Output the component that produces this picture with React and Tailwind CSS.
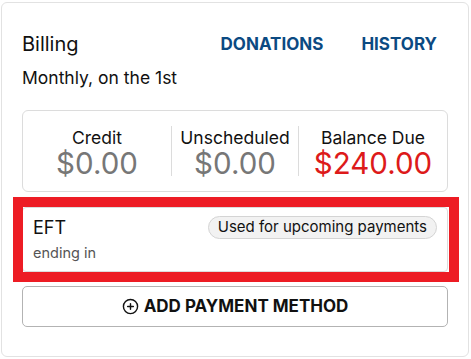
import React from "react";
import { CirclePlus } from "lucide-react";

export default function App() {
  return (
    <div className="w-[471px] h-[359px] bg-white pl-px pt-[2px] font-['Inter',sans-serif] text-[#111]">
      <div className="w-[468px] h-[355px] border border-[#e2e2e2] rounded-[6px] px-5 pt-[27px]">
        <div className="flex items-center justify-between h-[28px]">
          <div className="text-[20px] leading-[28px]">Billing</div>
          <div className="flex items-center gap-[38px] mr-[11px] text-[17px] leading-[24px] font-bold text-[#0b4a82]">
            <span>DONATIONS</span>
            <span>HISTORY</span>
          </div>
        </div>
        <div className="mt-2 text-[17.5px] leading-[24px]">Monthly, on the 1st</div>

        <div className="mt-5 border border-[#dcdcdc] rounded-[6px] py-[15px] grid grid-cols-[148px_127px_1fr]">
          <div className="flex flex-col items-center">
            <div className="text-[17.5px] leading-[24px]">Credit</div>
            <div className="text-[29.5px] leading-[26px] text-[#777777]">$0.00</div>
          </div>
          <div className="flex flex-col items-center border-l border-[#dcdcdc]">
            <div className="text-[17.5px] leading-[24px]">Unscheduled</div>
            <div className="text-[29.5px] leading-[26px] text-[#777777]">$0.00</div>
          </div>
          <div className="flex flex-col items-center border-l border-[#dcdcdc]">
            <div className="text-[17.5px] leading-[24px]">Balance Due</div>
            <div className="text-[29.5px] leading-[26px] text-[#dd1a1a]">$240.00</div>
          </div>
        </div>

        <div className="relative mt-[15px]">
          <div className="border border-[#dcdcdc] rounded-[4px] px-[10px] pt-[8px] pb-[8px]">
            <div className="flex items-start justify-between">
              <div className="text-[18px] leading-[23px]">EFT</div>
              <div className="h-[23px] flex items-center px-[9px] rounded-full border border-[#d4d4d4] bg-[#f2f2f2] text-[15px]">
                Used for upcoming payments
              </div>
            </div>
            <div className="mt-[4px] text-[14.5px] leading-[20px] text-[#555]">ending in</div>
          </div>
          <div className="absolute left-[-9px] right-[-11px] top-[-10px] bottom-[-10px] border-[10px] border-[#ed1c24] pointer-events-none"></div>
        </div>

        <div className="mt-[14px] h-[41px] border border-[#b3b3b3] rounded-[5px] flex items-center justify-center gap-[5px] text-[17px] font-bold">
          <CirclePlus size={17} strokeWidth={2} />
          <span>ADD PAYMENT METHOD</span>
        </div>
      </div>
    </div>
  );
}
